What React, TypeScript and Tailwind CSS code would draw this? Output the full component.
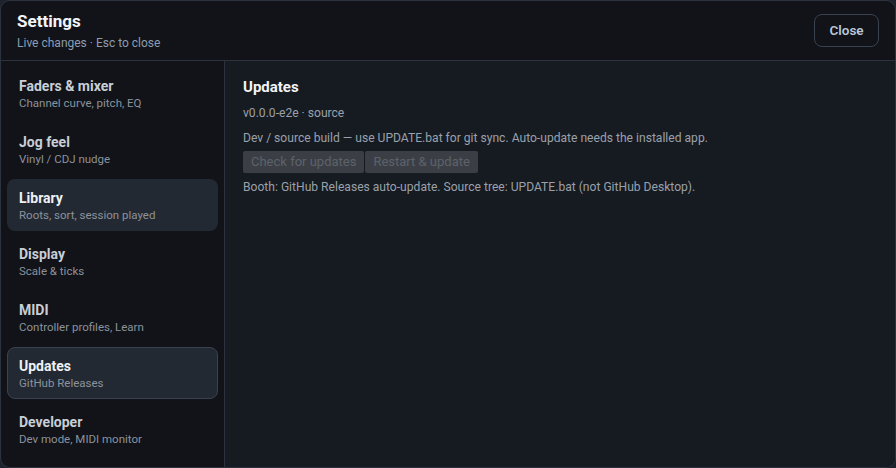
import React from "react";

const items = [
  { t: "Faders & mixer", s: "Channel curve, pitch, EQ" },
  { t: "Jog feel", s: "Vinyl / CDJ nudge" },
  { t: "Library", s: "Roots, sort, session played", hover: true },
  { t: "Display", s: "Scale & ticks" },
  { t: "MIDI", s: "Controller profiles, Learn" },
  { t: "Updates", s: "GitHub Releases", active: true },
  { t: "Developer", s: "Dev mode, MIDI monitor" },
];

export default function App() {
  return (
    <div
      className="w-[896px] h-[468px] bg-[#1d232c] overflow-hidden"
      style={{ fontFamily: "Roboto, 'Liberation Sans', sans-serif" }}
    >
      <div className="w-full h-full flex flex-col rounded-[10px] border border-[#2c333e] bg-[#111318] overflow-hidden">
        <div className="h-[60px] shrink-0 flex items-center justify-between pl-4 pr-[16px] border-b border-[#2c333e]">
          <div className="flex flex-col">
            <div className="text-[17px] font-bold text-[#f3f5f8] leading-[20px]">Settings</div>
            <div className="text-[12px] text-[#8e9db0] leading-[16px] mt-[4px]">Live changes · Esc to close</div>
          </div>
          <button className="h-[33px] w-[65px] rounded-[8px] border border-[#39424f] text-[13.5px] font-semibold text-[#b9c7d8] bg-transparent">
            Close
          </button>
        </div>
        <div className="flex-1 flex min-h-0">
          <div className="w-[224px] shrink-0 border-r border-[#2c333e] p-[6px] flex flex-col gap-[4px]">
            {items.map((it) => (
              <div
                key={it.t}
                className={
                  "h-[52px] rounded-[8px] pl-[11px] pt-[2px] flex flex-col justify-center border " +
                  (it.active
                    ? "bg-[#232932] border-[#3a4250]"
                    : it.hover
                    ? "bg-[#232932] border-transparent"
                    : "border-transparent")
                }
              >
                <div
                  className={
                    "text-[14px] font-bold leading-[17px] " +
                    (it.active || it.hover ? "text-[#eef1f5]" : "text-[#c9ced6]")
                  }
                >
                  {it.t}
                </div>
                <div className="text-[11.5px] leading-[15px] text-[#8b929c] mt-[1px]">{it.s}</div>
              </div>
            ))}
          </div>
          <div className="flex-1 bg-[#161a21] px-[18px] pt-[16px]">
            <div className="text-[15px] font-bold text-[#f1f3f6] leading-[20px]">Updates</div>
            <div className="text-[12.1px] text-[#9aa1ab] mt-[8px] leading-[16px]">v0.0.0-e2e · source</div>
            <div className="text-[12.1px] text-[#9aa1ab] mt-[9px] leading-[16px]">
              Dev / source build — use UPDATE.bat for git sync. Auto-update needs the installed app.
            </div>
            <div className="flex gap-[1px] mt-[5px]">
              <button className="h-[22px] px-[8px] rounded-[2px] bg-[#3b3f45] text-[13px] text-[#5d626a]">
                Check for updates
              </button>
              <button className="h-[22px] px-[8px] rounded-[2px] bg-[#3b3f45] text-[13px] text-[#5d626a]">
                Restart &amp; update
              </button>
            </div>
            <div className="text-[12.1px] text-[#9aa1ab] mt-[6px] leading-[16px]">
              Booth: GitHub Releases auto-update. Source tree: UPDATE.bat (not GitHub Desktop).
            </div>
          </div>
        </div>
      </div>
    </div>
  );
}
